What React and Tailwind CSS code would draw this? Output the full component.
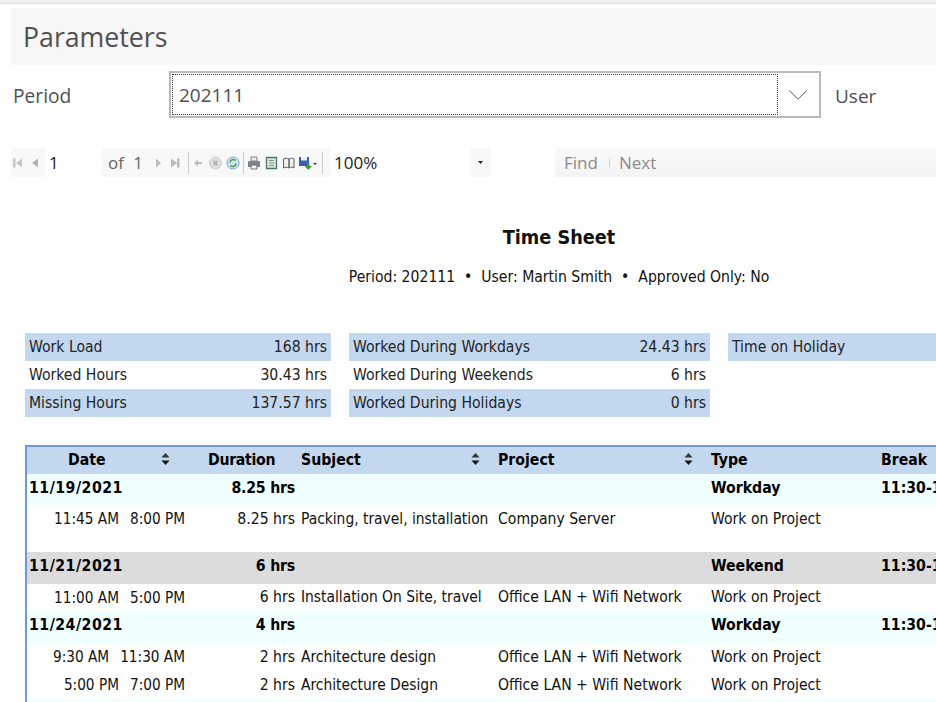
import { ChevronDown } from 'lucide-react';

const SUMMARY = [
  { width: 'w-[306px]', rows: [['Work Load', '168 hrs', true], ['Worked Hours', '30.43 hrs', false], ['Missing Hours', '137.57 hrs', true]] },
  { width: 'w-[361px]', rows: [['Worked During Workdays', '24.43 hrs', true], ['Worked During Weekends', '6 hrs', false], ['Worked During Holidays', '0 hrs', true]] },
  { width: 'w-[208px]', rows: [['Time on Holiday', '', true]] },
];

const GRID = 'grid grid-cols-[172px_100px_197px_213px_170px_100px]';

function SortArrows() {
  return (
    <svg width="9" height="14" viewBox="0 0 9 14" className="shrink-0">
      <path d="M4.500 1 8.500 5.500H.5z" fill="#333" />
      <path d="M.5 8.500h8L4.500 13z" fill="#111" />
    </svg>
  );
}

function Group({ date, total, type, bg, height = 'h-[31px]' }) {
  return (
    <div className={`${GRID} ${height} ${bg} items-center pb-[4px] font-bold text-[15.700px] text-black`}>
      <div className="pl-[2px] tracking-[0.5px]">{date}</div>
      <div className="text-right pr-[4px] tracking-[-0.2px] whitespace-nowrap">{total}</div>
      <div />
      <div />
      <div className="pl-[2px]">{type}</div>
      <div className="pl-[2px] whitespace-nowrap">11:30-13:00</div>
    </div>
  );
}

function Entry({ start, end, hours, subject, project, height = 'h-[28px]' }) {
  return (
    <div className={`${GRID} ${height} items-center pt-[1px] text-[15.600px] text-[#111]`}>
      <div className="flex justify-end gap-[11px] pr-[14px] whitespace-nowrap text-[15.200px]">
        <span>{start}</span>
        <span>{end}</span>
      </div>
      <div className="text-right pr-[4px] whitespace-nowrap">{hours}</div>
      <div className="pl-[2px] whitespace-nowrap text-[15.400px]">{subject}</div>
      <div className="pl-[2px] whitespace-nowrap">{project}</div>
      <div className="pl-[2px] whitespace-nowrap">Work on Project</div>
      <div />
    </div>
  );
}

function ToolIcons() {
  return (
    <>
      <svg width="35" height="12" viewBox="0 0 35 12" className="shrink-0">
        <path d="M2 1.500h2.500v9H2zM11 1.500v9L5 6z" fill="#c6c6c6" />
        <path d="M27 1.500v9L21 6z" fill="#b0b0b0" />
      </svg>
      <div className="w-[56px] h-full shrink-0 bg-white pl-[3px] flex items-center text-[17px] text-[#222]">1</div>
      <div className="w-[48px] shrink-0 flex justify-between pl-[6px] pr-[7px] text-[17px] text-[#666]">
        <span>of</span>
        <span>1</span>
      </div>
      <svg width="38" height="12" viewBox="0 0 38 12" className="shrink-0">
        <path d="M6 1.500v9l5-4.500z" fill="#bbb" />
        <path d="M21 1.500v9l6-4.500zM27 1.500h2.500v9H27z" fill="#bbb" />
      </svg>
      <div className="w-px h-[22px] shrink-0 bg-[#ccc]" />
      <svg width="54" height="14" viewBox="0 0 54 14" className="shrink-0">
        <path d="M5 7l4-3.500V6h4v2H9v2.500z" fill="#bdbdbd" />
        <circle cx="26.500" cy="7" r="6" fill="#dedede" stroke="#cdcdcd" />
        <path d="M24.500 5l4 4m0-4l-4 4" stroke="#a8a8a8" strokeWidth="1.400" />
        <circle cx="44" cy="7" r="6" fill="#cfe3f2" stroke="#7fa9c9" />
        <path d="M41 6.500a3.200 3.200 0 0 1 5.500-2M47 7.500a3.200 3.200 0 0 1-5.500 2" stroke="#4f9a5a" strokeWidth="1.500" fill="none" />
      </svg>
      <div className="w-px h-[22px] shrink-0 bg-[#ccc]" />
      <svg width="78" height="14" viewBox="0 0 78 14" className="shrink-0">
        <path d="M7 1h6v4H7z" fill="#eee" stroke="#777" strokeWidth=".9" />
        <path d="M5 5h10a1 1 0 0 1 1 1v5H4V6a1 1 0 0 1 1-1z" fill="#7d848b" />
        <path d="M7 9h6v4H7z" fill="#f2f2f2" stroke="#666" strokeWidth=".9" />
        <path d="M22.500 1.500h10v11h-10z" fill="#dbe6d8" stroke="#4f7468" strokeWidth="1.300" />
        <path d="M25 4.500h5M25 7h5M25 9.500h5" stroke="#7b9a8e" />
        <path d="M39.500 3c2-1 3.500-1 5.500 0v9c-2-1-3.500-1-5.500 0zM45 3c2-1 3.500-1 5 0v9c-1.500-1-3-1-5 0z" fill="#f1f1ea" stroke="#555f6a" strokeWidth="1" />
        <path d="M55 1h10v9H55z" fill="#3d5cb5" />
        <path d="M57 1h6v3.500h-6z" fill="#e8ecf5" />
        <path d="M63 7.500h2.500v2.500H68l-3.700 4-3.700-4H63z" fill="#3f9a3a" />
        <path d="M69 7h4l-2 2z" fill="#333" />
      </svg>
      <div className="w-px h-[22px] shrink-0 bg-[#ccc]" />
    </>
  );
}

export default function App() {
  return (
    <div className="w-[936px] h-[702px] overflow-hidden bg-white font-['Open_Sans','Noto_Sans',sans-serif]">
      <div className="h-[4px] bg-[#f0f0f0] border-b border-[#dedede]" />

      <div className="ml-[11px] mt-[4px] h-[57px] bg-[#f7f7f7] flex items-center pl-[12px] pt-[2px] text-[26.700px] text-[#505050]">
        Parameters
      </div>

      <div className="flex items-center mt-[6px] h-[47px]">
        <div className="w-[169px] pl-[13px] pt-[3px] text-[19.200px] text-[#505050]">Period</div>
        <div className="w-[652px] h-full border-2 border-[#b9b9b9] bg-white flex p-px">
          <div className="flex-1 border border-dotted border-[#333] flex items-center pl-[6px] pt-[2px] text-[19px] text-[#505050]">202111</div>
          <div className="w-[40px] flex items-center justify-center">
            <ChevronDown size={34} strokeWidth={0.7} color="#555" />
          </div>
        </div>
        <div className="ml-[14px] pt-[3px] text-[19px] text-[#505050]">User</div>
      </div>

      <div className="flex items-center ml-[11px] mt-[30px] h-[29px] text-[#444]">
        <div className="flex items-center h-full w-[319px] bg-[#f8f8f8]">
          <ToolIcons />
        </div>
        <div className="w-[140px] pl-[4px] text-[17px] text-[#222]">100%</div>
        <div className="w-[21px] h-full bg-[#f8f8f8] flex items-center justify-center">
          <svg width="5" height="3" viewBox="0 0 5 3"><path d="M0 0h5L2.500 3z" fill="#222" /></svg>
        </div>
        <div className="w-[64px]" />
        <div className="flex-1 h-full bg-gradient-to-b from-[#f9f9f9] to-[#f4f4f4] flex items-center text-[17px] text-[#8a8a8a]">
          <span className="ml-[9px]">Find</span>
          <span className="w-px h-[8px] bg-[#ccc] ml-[11px]" />
          <span className="ml-[9px]">Next</span>
        </div>
      </div>

      <div className="font-['DejaVu_Sans_Condensed','DejaVu_Sans',sans-serif] [font-stretch:condensed]">
        <div className="mt-[47px] ml-[24px] text-center w-[1070px] text-[19.700px] leading-[28px] font-bold text-[#111]">Time Sheet</div>
        <div className="mt-[15px] ml-[24px] text-center w-[1070px] text-[15.600px] leading-[20px] text-[#111]">
          Period: 202111&nbsp; •&nbsp; User: Martin Smith&nbsp; •&nbsp; Approved Only: No
        </div>

        <div className="flex gap-[18px] mt-[46px] ml-[25px]">
          {SUMMARY.map((col, i) => (
            <div key={i} className={col.width}>
              {col.rows.map(([label, value, shaded]) => (
                <div key={label} className={`h-[28px] flex items-center justify-between px-[4px] pt-[2px] text-[15.600px] text-[#222] ${shaded ? 'bg-[#c3d8ef]' : ''}`}>
                  <span>{label}</span>
                  <span>{value}</span>
                </div>
              ))}
            </div>
          ))}
        </div>

        <div className="mt-[28px] ml-[25px] w-[1000px] border-l-2 border-t-2 border-[#7097e0]">
          <div className={`${GRID} h-[27px] items-center pb-[2px] bg-[#c3d8ef] font-bold text-[15.700px] text-black`}>
            <div className="flex items-center pl-[41px] pr-[29px] justify-between"><span>Date</span><SortArrows /></div>
            <div className="pl-[9px] whitespace-nowrap tracking-[-0.3px]">Duration</div>
            <div className="flex items-center pl-[2px] pr-[16px] justify-between"><span>Subject</span><SortArrows /></div>
            <div className="flex items-center pl-[2px] pr-[16px] justify-between"><span>Project</span><SortArrows /></div>
            <div className="pl-[2px]">Type</div>
            <div className="pl-[2px]">Break</div>
          </div>
          <Group date="11/19/2021" total="8.25 hrs" type="Workday" bg="bg-[#f0ffff]" />
          <Entry start="11:45 AM" end="8:00 PM" hours="8.25 hrs" subject="Packing, travel, installation" project="Company Server" />
          <div className="h-[19px]" />
          <Group date="11/21/2021" total="6 hrs" type="Weekend" bg="bg-[#dcdcdc]" height="h-[32px]" />
          <Entry start="11:00 AM" end="5:00 PM" hours="6 hrs" subject="Installation On Site, travel" project="Office LAN + Wifi Network" height="h-[27px]" />
          <Group date="11/24/2021" total="4 hrs" type="Workday" bg="bg-[#f0ffff]" height="h-[32px]" />
          <Entry start="9:30 AM" end="11:30 AM" hours="2 hrs" subject="Architecture design" project="Office LAN + Wifi Network" />
          <Entry start="5:00 PM" end="7:00 PM" hours="2 hrs" subject="Architecture Design" project="Office LAN + Wifi Network" />
          <div className="h-[6px] bg-[#f0ffff]" />
        </div>
      </div>
    </div>
  );
}
